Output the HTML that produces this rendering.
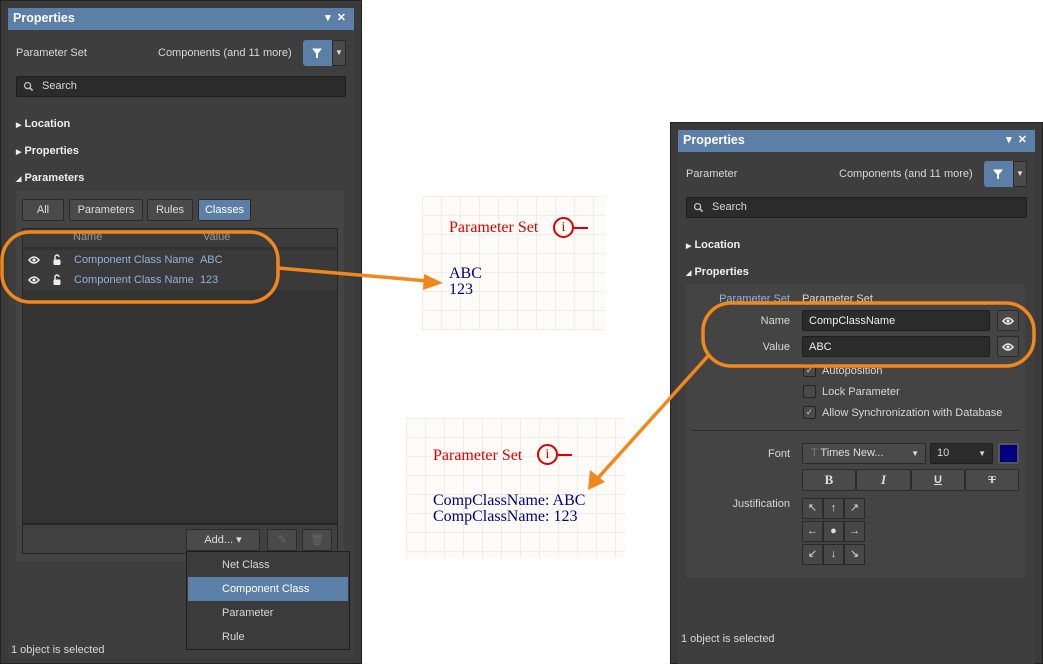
<!DOCTYPE html>
<html><head><meta charset="utf-8"><style>
*{box-sizing:border-box;margin:0;padding:0}
body{width:1043px;height:664px;background:#fff;position:relative;overflow:hidden;font-family:"Liberation Sans",sans-serif;font-size:11px;color:#d8d8d8}
.a{position:absolute}
.frame{background:#3a3a3a;border:1px solid #222}
.panel{background:#3e3e3e}
.hdr{background:#5b7fa6;color:#fff;font-weight:bold;font-size:12.5px;padding:3px 5px;height:22px}
.hdr span{position:absolute;right:8px;top:3px;font-size:11px}
.field{background:#2b2b2b;border:1px solid #1e1e1e;border-radius:2px}
.btn{background:#4a4a4a;border:1px solid #2a2a2a;border-radius:2px;color:#ddd;text-align:center}
.sel{background:#5b7fa6;color:#fff}
.bold{font-weight:bold;color:#eee}
.blue{color:#8fb4de}
.grid{background-color:#fdfbf8;background-image:linear-gradient(#f0ece8 1px,transparent 1px),linear-gradient(90deg,#f0ece8 1px,transparent 1px);background-size:19px 19px}
.ser{font-family:"Liberation Serif",serif;font-size:16px;line-height:16px}
.chk{width:13px;height:13px;border:1px solid #222;background:#4a4a4a;border-radius:2px;font-size:9px;text-align:center;line-height:11px;color:#ccc}
.jc{width:21px;height:21px;background:#474747;border:1px solid #2a2a2a;text-align:center;line-height:19px;font-size:11px;color:#ddd}
</style></head><body>
<svg width="0" height="0" style="position:absolute">
<defs>
<symbol id="eye" viewBox="0 0 12 12"><path d="M1 6Q6 0 11 6Q6 12 1 6Z" fill="none" stroke="#eee" stroke-width="1.5"/><circle cx="6" cy="6" r="1.6" fill="#eee"/></symbol>
<symbol id="lock" viewBox="0 0 12 12"><path d="M4 6V3.5a2 2 0 0 1 4 0" fill="none" stroke="#eee" stroke-width="1.4"/><rect x="2.5" y="6" width="7" height="5.5" rx="1" fill="#eee"/></symbol>
<symbol id="mag" viewBox="0 0 12 12"><circle cx="5" cy="5" r="3.3" fill="none" stroke="#bbb" stroke-width="1.5"/><line x1="7.5" y1="7.5" x2="10.5" y2="10.5" stroke="#bbb" stroke-width="1.8"/></symbol>
<symbol id="fun" viewBox="0 0 12 12"><path d="M1 1.5H11L7 6.5V11H5V6.5Z" fill="#fff"/></symbol>
</defs></svg>

<!-- LEFT PANEL -->
<div class="a frame" style="left:0;top:0;width:362px;height:664px"></div>
<div class="a panel" style="left:8px;top:8px;width:346px;height:650px"></div>
<div class="a hdr" style="left:8px;top:8px;width:346px">Properties<span>▾ &nbsp;✕</span></div>
<div class="a" style="left:16px;top:47px">Parameter Set</div>
<div class="a" style="left:158px;top:47px">Components (and 11 more)</div>
<div class="a sel" style="left:303px;top:40px;width:29px;height:26px;border-radius:3px 0 0 3px"><svg class="a" style="left:8px;top:7px" width="12" height="12"><use href="#fun"/></svg></div>
<div class="a btn" style="left:332px;top:40px;width:14px;height:26px;line-height:24px;font-size:8px">▼</div>
<div class="a field" style="left:16px;top:76px;width:330px;height:21px;padding:3px 0 0 25px">Search</div>
<svg class="a" style="left:23px;top:81px" width="11" height="11"><use href="#mag"/></svg>
<div class="a bold" style="left:16px;top:118px"><small style="font-size:7px">▶</small> Location</div>
<div class="a bold" style="left:16px;top:145px"><small style="font-size:7px">▶</small> Properties</div>
<div class="a bold" style="left:16px;top:172px"><small style="font-size:7px">◢</small> Parameters</div>
<div class="a" style="left:16px;top:191px;width:328px;height:370px;background:#444"></div>
<div class="a btn" style="left:22px;top:199px;width:42px;height:22px;line-height:20px">All</div>
<div class="a btn" style="left:69px;top:199px;width:74px;height:22px;line-height:20px">Parameters</div>
<div class="a btn" style="left:147px;top:199px;width:46px;height:22px;line-height:20px">Rules</div>
<div class="a btn sel" style="left:198px;top:199px;width:53px;height:22px;line-height:20px">Classes</div>
<div class="a" style="left:22px;top:228px;width:316px;height:296px;background:#333;border:1px solid #262626"></div>
<div class="a" style="left:23px;top:229px;width:314px;height:18px;background:#3c3c3c;color:#999;padding:2px 0 0 50px">Name<span style="position:absolute;left:180px">Value</span></div>
<div class="a" style="left:23px;top:250px;width:314px;height:40px;background:#3a3a3a"></div>
<svg class="a" style="left:28px;top:254px" width="12" height="12"><use href="#eye"/></svg>
<svg class="a" style="left:51px;top:253px" width="12" height="13"><use href="#lock"/></svg>
<div class="a blue" style="left:74px;top:254px">Component Class Name &nbsp;ABC</div>
<svg class="a" style="left:28px;top:274px" width="12" height="12"><use href="#eye"/></svg>
<svg class="a" style="left:51px;top:273px" width="12" height="13"><use href="#lock"/></svg>
<div class="a blue" style="left:74px;top:274px">Component Class Name &nbsp;123</div>
<div class="a" style="left:22px;top:524px;width:316px;height:30px;background:#404040;border:1px solid #262626"></div>
<div class="a btn" style="left:186px;top:529px;width:74px;height:22px;line-height:20px">Add... ▾</div>
<div class="a btn" style="left:267px;top:529px;width:30px;height:22px;color:#666;line-height:20px">✎</div>
<div class="a btn" style="left:302px;top:529px;width:30px;height:22px;color:#666;line-height:20px">🗑︎</div>
<div class="a" style="left:186px;top:551px;width:164px;height:99px;background:#3b3b3b;border:1px solid #1f1f1f"></div>
<div class="a" style="left:222px;top:559px">Net Class</div>
<div class="a sel" style="left:188px;top:577px;width:160px;height:24px;padding:6px 0 0 34px">Component Class</div>
<div class="a" style="left:222px;top:607px">Parameter</div>
<div class="a" style="left:222px;top:631px">Rule</div>
<div class="a" style="left:11px;top:644px">1 object is selected</div>

<!-- CANVASES -->
<div class="a grid" style="left:422px;top:196px;width:183px;height:135px"></div>
<div class="a ser" style="left:449px;top:220px;color:#d00">Parameter Set</div>
<div class="a" style="left:553px;top:217px;width:21px;height:21px;border:2px solid #d00;border-radius:50%;color:#d00;font-family:'Liberation Serif',serif;font-size:14px;text-align:center;line-height:17px">i</div>
<div class="a" style="left:574px;top:227px;width:14px;height:2px;background:#d00"></div>
<div class="a ser" style="left:449px;top:266px;color:#000080">ABC<br>123</div>

<div class="a grid" style="left:406px;top:418px;width:219px;height:140px"></div>
<div class="a ser" style="left:433px;top:448px;color:#d00">Parameter Set</div>
<div class="a" style="left:537px;top:444px;width:21px;height:21px;border:2px solid #d00;border-radius:50%;color:#d00;font-family:'Liberation Serif',serif;font-size:14px;text-align:center;line-height:17px">i</div>
<div class="a" style="left:558px;top:454px;width:14px;height:2px;background:#d00"></div>
<div class="a ser" style="left:433px;top:493px;color:#000080">CompClassName: ABC<br>CompClassName: 123</div>

<!-- RIGHT PANEL -->
<div class="a frame" style="left:670px;top:122px;width:373px;height:542px"></div>
<div class="a panel" style="left:678px;top:130px;width:357px;height:534px"></div>
<div class="a hdr" style="left:678px;top:130px;width:357px">Properties<span>▾ &nbsp;✕</span></div>
<div class="a" style="left:686px;top:168px">Parameter</div>
<div class="a" style="left:839px;top:168px">Components (and 11 more)</div>
<div class="a sel" style="left:984px;top:161px;width:29px;height:26px;border-radius:3px 0 0 3px"><svg class="a" style="left:8px;top:7px" width="12" height="12"><use href="#fun"/></svg></div>
<div class="a btn" style="left:1013px;top:161px;width:14px;height:26px;line-height:24px;font-size:8px">▼</div>
<div class="a field" style="left:686px;top:197px;width:341px;height:21px;padding:3px 0 0 25px">Search</div>
<svg class="a" style="left:693px;top:202px" width="11" height="11"><use href="#mag"/></svg>
<div class="a bold" style="left:686px;top:239px"><small style="font-size:7px">▶</small> Location</div>
<div class="a bold" style="left:686px;top:266px"><small style="font-size:7px">◢</small> Properties</div>
<div class="a" style="left:686px;top:284px;width:339px;height:294px;background:#444"></div>
<div class="a blue" style="left:690px;top:293px;width:100px;text-align:right">Parameter Set</div>
<div class="a" style="left:802px;top:293px">Parameter Set</div>
<div class="a" style="left:690px;top:315px;width:100px;text-align:right">Name</div>
<div class="a field" style="left:802px;top:310px;width:188px;height:21px;padding:4px 6px;color:#eee">CompClassName</div>
<div class="a btn" style="left:997px;top:310px;width:22px;height:21px"><svg class="a" style="left:4px;top:4px" width="12" height="12"><use href="#eye"/></svg></div>
<div class="a" style="left:690px;top:341px;width:100px;text-align:right">Value</div>
<div class="a field" style="left:802px;top:336px;width:188px;height:21px;padding:4px 6px;color:#eee">ABC</div>
<div class="a btn" style="left:997px;top:336px;width:22px;height:21px"><svg class="a" style="left:4px;top:4px" width="12" height="12"><use href="#eye"/></svg></div>
<div class="a chk" style="left:803px;top:364px">✓</div><div class="a" style="left:822px;top:365px">Autoposition</div>
<div class="a chk" style="left:803px;top:385px"></div><div class="a" style="left:822px;top:386px">Lock Parameter</div>
<div class="a chk" style="left:803px;top:406px">✓</div><div class="a" style="left:822px;top:407px">Allow Synchronization with Database</div>
<div class="a" style="left:692px;top:430px;width:327px;height:1px;background:#2a2a2a"></div>
<div class="a" style="left:690px;top:448px;width:100px;text-align:right">Font</div>
<div class="a btn" style="left:802px;top:443px;width:124px;height:21px;text-align:left;padding:3px 0 0 8px"><span style="color:#777">T</span> Times New...<span style="position:absolute;right:6px;font-size:8px;top:5px">▼</span></div>
<div class="a field" style="left:930px;top:443px;width:63px;height:21px;padding:3px 6px">10<span style="position:absolute;right:6px;font-size:8px;top:5px">▼</span></div>
<div class="a" style="left:998px;top:443px;width:21px;height:21px;border:2px solid #555;background:#000080;border-radius:2px"></div>
<div class="a btn" style="left:802px;top:469px;width:54px;height:22px;line-height:20px;font-family:'Liberation Serif',serif;font-weight:bold;font-size:13px">B</div>
<div class="a btn" style="left:856px;top:469px;width:55px;height:22px;line-height:20px;font-family:'Liberation Serif',serif;font-style:italic;font-weight:bold;font-size:13px">I</div>
<div class="a btn" style="left:911px;top:469px;width:54px;height:22px;line-height:20px;text-decoration:underline;font-weight:bold">U</div>
<div class="a btn" style="left:965px;top:469px;width:54px;height:22px;line-height:20px;font-family:'Liberation Serif',serif;text-decoration:line-through;font-weight:bold">T</div>
<div class="a" style="left:690px;top:498px;width:100px;text-align:right">Justification</div>
<div class="a jc" style="left:802px;top:498px">↖</div><div class="a jc" style="left:823px;top:498px">↑</div><div class="a jc" style="left:844px;top:498px">↗</div>
<div class="a jc" style="left:802px;top:521px">←</div><div class="a jc" style="left:823px;top:521px">●</div><div class="a jc" style="left:844px;top:521px">→</div>
<div class="a jc sel" style="left:802px;top:544px">↙</div><div class="a jc" style="left:823px;top:544px">↓</div><div class="a jc" style="left:844px;top:544px">↘</div>
<div class="a" style="left:681px;top:633px">1 object is selected</div>

<!-- ORANGE ANNOTATIONS -->
<svg class="a" style="left:0;top:0" width="1043" height="664">
<rect x="2" y="232" width="276" height="70" rx="28" fill="none" stroke="#f0881c" stroke-width="3.5"/>
<line x1="278" y1="268" x2="428" y2="281" stroke="#f0881c" stroke-width="3.5"/>
<polygon points="443,283 424,274 423,290" fill="#f0881c"/>
<rect x="703" y="303" width="331" height="63" rx="28" fill="none" stroke="#f0881c" stroke-width="3.5"/>
<line x1="708" y1="356" x2="598" y2="478" stroke="#f0881c" stroke-width="3.5"/>
<polygon points="588,490 590,470 605,482" fill="#f0881c"/>
</svg>
</body></html>
